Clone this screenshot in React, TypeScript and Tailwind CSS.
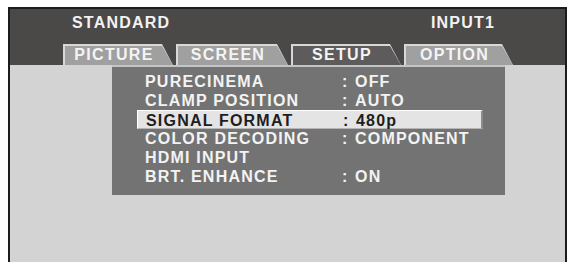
const tabs = [
  { label: "PICTURE", width: "w-[110px]", active: false },
  { label: "SCREEN", width: "w-[112px]", active: false },
  { label: "SETUP", width: "w-[110px]", active: true },
  { label: "OPTION", width: "w-[109px]", active: false },
];

const rows = [
  { label: "PURECINEMA", value: "OFF" },
  { label: "CLAMP POSITION", value: "AUTO" },
  { label: "SIGNAL FORMAT", value: "480p", selected: true },
  { label: "COLOR DECODING", value: "COMPONENT" },
  { label: "HDMI INPUT", value: "" },
  { label: "BRT. ENHANCE", value: "ON" },
];

function Tab({ label, width, active }: { label: string; width: string; active: boolean }) {
  return (
    <div className={`${width} h-[21px] bg-[#d8d8d8] pt-[2px] pl-[2px] [clip-path:polygon(0_0,calc(100%-11px)_0,100%_100%,0_100%)]`}>
      <div
        className={`h-full flex items-start justify-center pr-[10px] pt-[1px] text-[16px] leading-[16px] tracking-[1.3px] ${
          active ? "bg-[#5d5b5b]" : "bg-[#a0a0a0]"
        } text-[#f4f4f4] [clip-path:polygon(0_0,calc(100%-11px)_0,100%_100%,0_100%)]`}
      >
        {label}
      </div>
    </div>
  );
}

export default function App() {
  return (
    <div className="w-[573px] h-[262px] overflow-hidden bg-white pt-[7px] pl-[8px] font-['Liberation_Sans',Arial,sans-serif] font-bold">
      <div className="w-[559px] h-[270px] border-[2px] border-[#1c1c1c] flex flex-col">
        {/* header band */}
        <div className="bg-[#4b4848] h-[56px] flex flex-col">
          <div className="flex justify-between pt-[6px] pl-[62px] pr-[70px] text-[16px] leading-[16px] tracking-[1.2px] text-[#f2f2f2]">
            <span>STANDARD</span>
            <span>INPUT1</span>
          </div>
          <div className="flex gap-[3px] pl-[53px] mt-auto">
            {tabs.map((t) => (
              <Tab key={t.label} {...t} />
            ))}
          </div>
        </div>

        {/* content */}
        <div className="flex-1 bg-[#d3d3d3] pl-[102px]">
          <div className="w-[393px] h-[130px] bg-[#737373] border-t-[2px] border-[#c4c4c4] pt-[5px] pl-[25px] text-[16px] leading-[19px] tracking-[1.2px]">
            {rows.map((r) => (
              <div
                key={r.label}
                className={`w-[346px] h-[19px] flex pl-[8px] ${
                  r.selected
                    ? "bg-[#e4e4e4] text-[#1e1e1e] border-t border-l border-white border-r-[2px] border-r-[#8c8c8c] border-b border-b-[#b5b5b5] pl-[7px]"
                    : "text-[#f3f3f3]"
                }`}
              >
                <span className="w-[197px] shrink-0">{r.label}</span>
                <span className="w-[13px] shrink-0">{r.value ? ":" : ""}</span>
                <span>{r.value}</span>
              </div>
            ))}
          </div>
        </div>
      </div>
    </div>
  );
}
